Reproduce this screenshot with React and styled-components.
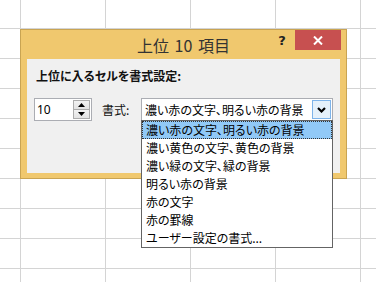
import React from 'react';
import styled, { createGlobalStyle } from 'styled-components';

const GlobalStyle = createGlobalStyle`
  html, body {
    margin: 0;
    padding: 0;
    background: #fff;
  }
  body {
    font-family: "Noto Sans CJK JP", "Noto Sans", sans-serif;
    font-feature-settings: "palt";
  }
`;

const Sheet = styled.div`
  position: relative;
  width: 376px;
  height: 282px;
  overflow: hidden;
  box-sizing: border-box;
  padding: 29px 0 0 20px;
  background-color: #fff;
  background-image:
    linear-gradient(to right, #d4d4d4 1px, transparent 1px),
    linear-gradient(to bottom, #d4d4d4 1px, transparent 1px);
  background-size: 85px 30px;
  background-position: 20px 28px;
`;

const Dialog = styled.div`
  width: 327px;
  height: 150px;
  box-sizing: border-box;
  background: #f0c86e;
  border: 1px solid #c9a452;
  padding: 0 6px 5px 6px;
  display: flex;
  flex-direction: column;
`;

const TitleBar = styled.div`
  height: 29px;
  margin: 0 -6px;
  display: grid;
  grid-template-columns: 1fr auto 1fr;
`;

const Title = styled.div`
  grid-column: 2;
  font-size: 16px;
  line-height: 30px;
  color: #333;
  white-space: nowrap;
  word-spacing: 2px;
`;

const Controls = styled.div`
  grid-column: 3;
  display: flex;
  justify-content: flex-end;
  align-items: flex-start;
  padding-right: 5px;
`;

const HelpButton = styled.div`
  width: 26px;
  height: 20px;
  font-family: "DejaVu Sans", sans-serif;
  font-weight: bold;
  font-size: 13px;
  line-height: 22px;
  text-align: center;
  color: #222;
`;

const CloseButton = styled.div`
  width: 46px;
  height: 20px;
  background: #c75050;
  display: flex;
  align-items: center;
  justify-content: center;
`;

const Panel = styled.div`
  flex: 1;
  background: #f0f0f0;
  padding: 10px 0 0 7px;
`;

const Heading = styled.div`
  padding-left: 2px;
  font-size: 12px;
  font-weight: bold;
  line-height: 14px;
  color: #111;
`;

const FormRow = styled.div`
  margin-top: 15px;
  display: flex;
  align-items: center;
`;

const SpinBox = styled.div`
  width: 58px;
  height: 23px;
  box-sizing: border-box;
  border: 1px solid #abadb3;
  background: #fff;
  display: flex;
`;

const SpinValue = styled.div`
  flex: 1;
  font-family: "Noto Sans", sans-serif;
  font-size: 12px;
  line-height: 21px;
  padding-left: 2px;
  color: #000;
`;

const SpinButtons = styled.div`
  width: 17px;
  padding: 1px 1px 1px 0;
  display: flex;
  flex-direction: column;
`;

const SpinButton = styled.div`
  flex: 1;
  border: 1px solid #acacac;
  background: linear-gradient(#f2f2f2, #e3e3e3);
  display: flex;
  align-items: center;
  justify-content: center;
  & + & {
    border-top: none;
  }
`;

const FieldLabel = styled.div`
  width: 39px;
  margin-left: 10px;
  font-size: 12px;
  color: #111;
`;

const Combo = styled.div`
  position: relative;
  width: 192px;
  height: 23px;
  box-sizing: border-box;
  border: 1px solid #abadb3;
  background: #fff;
  display: flex;
  align-items: center;
`;

const ComboText = styled.div`
  flex: 1;
  padding-left: 3px;
  font-size: 12px;
  color: #000;
  white-space: nowrap;
`;

const DropButton = styled.div`
  width: 19px;
  height: 19px;
  box-sizing: border-box;
  margin-right: 1px;
  border: 1px solid #7eb4ea;
  background: #e5f1fb;
  display: flex;
  align-items: center;
  justify-content: center;
`;

const List = styled.div`
  position: absolute;
  top: 100%;
  left: -1px;
  width: 192px;
  box-sizing: border-box;
  border: 1px solid #646464;
  background: #fff;
  z-index: 2;
`;

const ListItem = styled.div`
  height: 18px;
  box-sizing: border-box;
  padding-left: 3px;
  font-size: 12px;
  line-height: 16px;
  color: #000;
  white-space: nowrap;
  border: 1px solid ${p => (p.$selected ? '#333' : 'transparent')};
  border-style: ${p => (p.$selected ? 'dotted' : 'solid')};
  background: ${p => (p.$selected ? '#91c9f7' : 'transparent')};
`;

const options = [
  '濃い赤の文字、明るい赤の背景',
  '濃い黄色の文字、黄色の背景',
  '濃い緑の文字、緑の背景',
  '明るい赤の背景',
  '赤の文字',
  '赤の罫線',
  'ユーザー設定の書式...',
];

const App = () => (
  <>
    <GlobalStyle />
    <Sheet>
      <Dialog>
        <TitleBar>
          <Title>上位 10 項目</Title>
          <Controls>
            <HelpButton>?</HelpButton>
            <CloseButton>
              <svg width="10" height="9" viewBox="0 0 10 9">
                <path d="M1 0.5 L9 8.5 M9 0.5 L1 8.5" stroke="#fff" strokeWidth="2" />
              </svg>
            </CloseButton>
          </Controls>
        </TitleBar>
        <Panel>
          <Heading>上位に入るセルを書式設定:</Heading>
          <FormRow>
            <SpinBox>
              <SpinValue>10</SpinValue>
              <SpinButtons>
                <SpinButton>
                  <svg width="7" height="4" viewBox="0 0 7 4">
                    <path d="M0 4 L3.5 0 L7 4 Z" fill="#000" />
                  </svg>
                </SpinButton>
                <SpinButton>
                  <svg width="7" height="4" viewBox="0 0 7 4">
                    <path d="M0 0 L7 0 L3.5 4 Z" fill="#000" />
                  </svg>
                </SpinButton>
              </SpinButtons>
            </SpinBox>
            <FieldLabel>書式:</FieldLabel>
            <Combo>
              <ComboText>{options[0]}</ComboText>
              <DropButton>
                <svg width="9" height="6" viewBox="0 0 9 6">
                  <path d="M1 1 L4.5 4.5 L8 1" stroke="#000" strokeWidth="2.2" fill="none" />
                </svg>
              </DropButton>
              <List>
                {options.map((o, i) => (
                  <ListItem key={o} $selected={i === 0}>{o}</ListItem>
                ))}
              </List>
            </Combo>
          </FormRow>
        </Panel>
      </Dialog>
    </Sheet>
  </>
);

export default App;
